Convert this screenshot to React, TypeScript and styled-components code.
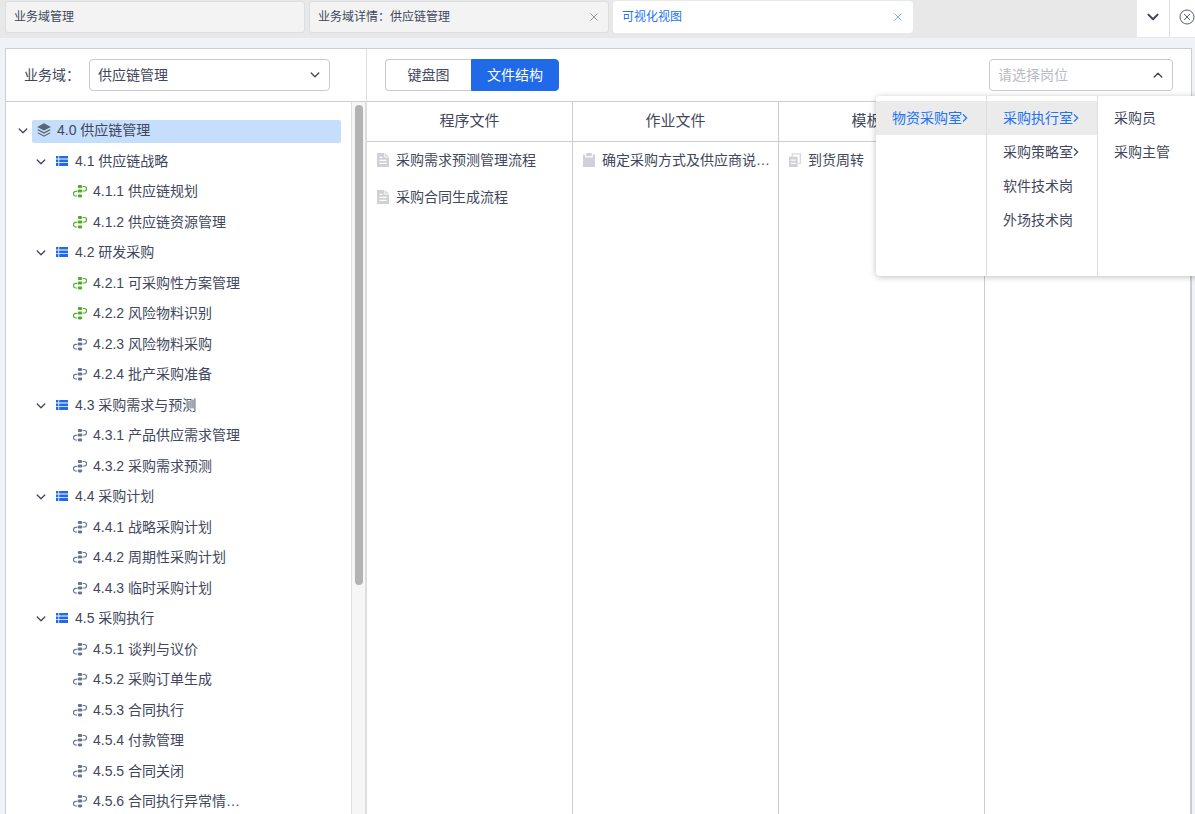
import React from "react";
import styled, { createGlobalStyle, css } from "styled-components";

const color = {
  text: "#41475c",
  blue: "#2069e9",
  link: "#2273ef",
  line: "#cccdd2",
  softLine: "#dcdee2",
  hover: "#ebebeb",
  green: "#4caf27",
  slate: "#66758f",
};

const GlobalStyle = createGlobalStyle`
  * { box-sizing: border-box; }
  body {
    margin: 0;
    overflow: hidden;
    background: #eff3f7;
    color: ${color.text};
    font: 14px/20px "Liberation Sans", "Noto Sans CJK SC", sans-serif;
  }
  button, input, select { font: inherit; color: inherit; }
  ul { margin: 0; padding: 0; list-style: none; }
`;

const plainButton = css`
  border: 0;
  padding: 0;
  background: none;
  cursor: pointer;
`;

const Page = styled.div`
  display: flex;
  flex-direction: column;
  height: 100vh;
`;

/* ---------- tab bar ---------- */

const TabBar = styled.nav`
  display: flex;
  flex: none;
  height: 38px;
  background: #e8e8e8;
  border-bottom: 1px solid #e8e8e8;
`;

const TabList = styled.div`
  display: flex;
  flex: 1;
  gap: 4px;
  padding: 1px 5px 4px;
  min-width: 0;
`;

const Tab = styled.div<{ $active?: boolean }>`
  display: flex;
  align-items: center;
  width: 300px;
  height: 32px;
  padding: 0 9px 0 8px;
  border: 1px solid ${(p) => (p.$active ? "#fff" : color.softLine)};
  border-radius: 3px;
  background: ${(p) => (p.$active ? "#fff" : "#f3f3f3")};
  color: ${(p) => (p.$active ? color.link : color.text)};
  font-size: 12px;
`;

const TabTitle = styled.button`
  ${plainButton}
  flex: 1;
  text-align: left;
`;

const TabClose = styled.button<{ $active?: boolean }>`
  ${plainButton}
  display: flex;
  color: ${(p) => (p.$active ? "#7fb0f5" : "#999")};
`;

const BarButton = styled.button<{ $last?: boolean }>`
  ${plainButton}
  display: flex;
  align-items: center;
  justify-content: ${(p) => (p.$last ? "flex-end" : "center")};
  width: ${(p) => (p.$last ? 26 : 32)}px;
  padding-bottom: 4px;
  border-left: ${(p) => (p.$last ? `1px solid ${color.softLine}` : "0")};
  background: #fff;
`;

/* ---------- panels ---------- */

const Main = styled.main`
  display: grid;
  grid-template-columns: 361px minmax(0, 1fr);
  flex: 1;
  min-height: 0;
  margin: 10px 3px 0 5px;
  border: 1px solid ${color.line};
  border-bottom: 0;
  background: #fff;
`;

const Side = styled.aside`
  display: flex;
  flex-direction: column;
  min-height: 0;
  border-right: 1px solid ${color.softLine};
`;

const Content = styled.section`
  display: flex;
  flex-direction: column;
  min-height: 0;
`;

const Toolbar = styled.header`
  display: flex;
  flex: none;
  align-items: center;
  height: 53px;
  padding: 0 18px;
  border-bottom: 1px solid ${color.line};
`;

const FieldLabel = styled.label`
  flex: none;
  width: 65px;
`;

const Field = styled.div<{ $width: number }>`
  position: relative;
  display: grid;
  width: ${(p) => p.$width}px;
`;

const control = css`
  grid-area: 1 / 1;
  width: 100%;
  height: 32px;
  padding: 0 32px 0 8px;
  border: 1px solid #c9cbd1;
  border-radius: 4px;
  outline: 0;
  background: #fff;
`;

const Select = styled.select`
  ${control}
  appearance: none;
`;

const TextInput = styled.input`
  ${control}
  &::placeholder { color: #b9bcc6; opacity: 1; }
`;

const FieldArrow = styled.span`
  display: flex;
  grid-area: 1 / 1;
  place-self: center end;
  margin-right: 10px;
  pointer-events: none;
`;

const Segment = styled.div`
  display: flex;
  margin-right: auto;
`;

const SegmentButton = styled.button<{ $active?: boolean }>`
  ${plainButton}
  width: ${(p) => (p.$active ? 88 : 86)}px;
  height: 32px;
  border: 1px solid ${(p) => (p.$active ? color.blue : "#c9cbd1")};
  border-right-width: ${(p) => (p.$active ? 1 : 0)}px;
  border-radius: ${(p) => (p.$active ? "0 4px 4px 0" : "4px 0 0 4px")};
  background: ${(p) => (p.$active ? color.blue : "#fff")};
  color: ${(p) => (p.$active ? "#fff" : color.text)};
`;

/* ---------- tree ---------- */

const TreeArea = styled.div`
  display: flex;
  flex: 1;
  min-height: 0;
`;

const TreeList = styled.ul`
  display: grid;
  grid-auto-rows: 30px 31px;
  align-content: start;
  flex: 1;
  min-width: 0;
  padding: 14px 10px 0 12px;
  overflow: hidden;
`;

const TreeRow = styled.li<{ $level: number }>`
  display: flex;
  align-items: center;
  gap: 4px;
  padding-left: ${(p) => p.$level * 18}px;
`;

const Toggle = styled.button`
  ${plainButton}
  display: flex;
  flex: none;
  width: 10px;
`;

const ToggleSpace = styled.span`
  flex: none;
  width: 10px;
`;

const TreeLabel = styled.button<{ $selected?: boolean }>`
  ${plainButton}
  display: flex;
  flex: 1;
  align-items: center;
  gap: 6px;
  height: 23px;
  padding: 0 5px 2px;
  border-radius: 2px;
  background: ${(p) => (p.$selected ? "#c5defc" : "none")};
  white-space: nowrap;
`;

const Track = styled.div`
  flex: none;
  width: 15px;
  padding: 3px;
  border: solid #dedede;
  border-width: 0 1px;
  background: #f6f6f6;
`;

const Thumb = styled.div`
  width: 8px;
  height: 68%;
  border-radius: 4px;
  background: #b3b3b3;
`;

/* ---------- file columns ---------- */

const Columns = styled.div`
  display: grid;
  grid-template-columns: repeat(4, minmax(0, 1fr));
  flex: 1;
  min-height: 0;
`;

const Column = styled.section`
  border-right: 1px solid ${color.line};
`;

const ColumnTitle = styled.h2`
  height: 40px;
  margin: 0;
  border-bottom: 1px solid ${color.line};
  font-size: 15px;
  font-weight: 400;
  line-height: 38px;
  text-align: center;
`;

const FileRow = styled.li`
  display: flex;
  align-items: center;
  gap: 6px;
  height: 37px;
  padding: 0 0 2px 9px;
  white-space: nowrap;
`;

/* ---------- cascading menu ---------- */

const Menu = styled.div`
  position: absolute;
  top: 37px;
  left: -113px;
  z-index: 2;
  display: flex;
  height: 180px;
  border-radius: 4px;
  background: #fff;
  box-shadow: 0 1px 6px rgba(0, 0, 0, 0.25);
`;

const MenuList = styled.ul`
  width: 111px;
  padding: 5px 0;
  border-right: 1px solid ${color.softLine};
  &:last-child { border-right: 0; }
`;

const MenuItem = styled.button<{ $active?: boolean }>`
  ${plainButton}
  display: flex;
  align-items: center;
  width: 100%;
  height: 34px;
  padding-left: 16px;
  background: ${(p) => (p.$active ? color.hover : "none")};
  color: ${(p) => (p.$active ? color.link : color.text)};
`;

/* ---------- icons ---------- */

const Chevron = ({ up, bold, size = 10 }: { up?: boolean; bold?: boolean; size?: number }) => (
  <svg width={size} height={size} viewBox="0 0 10 10" fill="none" stroke="currentColor" strokeWidth={bold ? 1.7 : 1.3} strokeLinecap="round" strokeLinejoin="round">
    <path d={up ? "M1.2 7L5 3.2 8.8 7" : "M1.2 3L5 6.8 8.8 3"} />
  </svg>
);

const ChevronRight = () => (
  <svg width="6" height="10" viewBox="0 0 6 10" fill="none" stroke="currentColor" strokeWidth="1.3">
    <path d="M1 1.4L4.6 5 1 8.6" />
  </svg>
);

const Cross = () => (
  <svg width="10" height="10" viewBox="0 0 10 10" fill="none" stroke="currentColor" strokeWidth="1">
    <path d="M1.4 1.4l7.2 7.2M8.6 1.4L1.4 8.6" />
  </svg>
);

const CircleCross = () => (
  <svg width="16" height="16" viewBox="0 0 16 16" fill="none" stroke="#5b6175" strokeWidth="1">
    <circle cx="8" cy="8" r="7" />
    <path d="M5 5l6 6M11 5l-6 6" />
  </svg>
);

const LayersIcon = () => (
  <svg width="14" height="14" viewBox="0 0 14 14" fill="#596475">
    <path d="M7 .2l6.8 3.7L7 7.6.2 3.9z" />
    <path d="M1.5 6.3L7 9.3l5.5-3 1.3.7L7 10.7.2 7z" />
    <path d="M1.5 9.4L7 12.4l5.5-3 1.3.7L7 13.8.2 10.1z" />
  </svg>
);

const ListIcon = () => (
  <svg width="14" height="14" viewBox="0 0 14 14" fill={color.blue}>
    <path d="M1 2h2.4v2.6H1zM4.2 2H13v2.6H4.2zM1 5.4h2.4V8H1zM4.2 5.4H13V8H4.2zM1 8.8h2.4V12H1zM4.2 8.8H13V12H4.2z" />
  </svg>
);

const FlowIcon = ({ tint }: { tint: string }) => (
  <svg width="14" height="14" viewBox="0 0 14 14" fill={tint}>
    <rect x="4.8" y="1" width="4.4" height="3" rx="1.3" />
    <rect x="4.6" y="5.6" width="4.8" height="3" rx="1.3" />
    <rect x="4.8" y="10.4" width="4.4" height="3" rx="1.3" />
    <g fill="none" stroke={tint} strokeWidth="1.2" strokeLinecap="round">
      <path d="M10.3 2.5h1.2a2 2.2 0 0 1 0 4.5h-.9" />
      <path d="M3.5 7.3h-.9a2.1 2.3 0 0 0 0 4.7h1" />
    </g>
  </svg>
);

const DocIcon = () => (
  <svg width="14" height="14" viewBox="0 0 14 14">
    <path fill="#cfd1d7" d="M1 0h7.4v4.6H13V14H1z" />
    <path fill="#d9dbe0" d="M9.2 0L13 3.8H9.2z" />
    <path stroke="#fff" strokeWidth="1.3" d="M3.4 4.4h3M3.4 7.4h7.2M3.4 10.4h7.2" />
  </svg>
);

const ClipboardIcon = () => (
  <svg width="14" height="14" viewBox="0 0 14 14" fill="#cfd1d7">
    <path d="M1 1.4h2.2v3h7.6v-3H13V14H1z" />
    <rect x="4.2" y="0" width="5.6" height="3.2" rx=".4" />
  </svg>
);

const CopyIcon = () => (
  <svg width="14" height="14" viewBox="0 0 14 14" fill="none">
    <path d="M4.3 3.4V.9h8.1v9.5h-2" stroke="#d7d9de" strokeWidth="1.4" />
    <path fill="#cfd1d7" d="M1 3.6h8.6V14H1z" />
    <path stroke="#fff" strokeWidth="1.2" d="M2.8 7.2h4.8M2.8 10.3h4.8" />
  </svg>
);

/* ---------- data ---------- */

type Node = { level: number; text: string; done?: boolean };

const nodes: Node[] = [
  { level: 0, text: "4.0 供应链管理" },
  { level: 1, text: "4.1 供应链战略" },
  { level: 2, text: "4.1.1 供应链规划", done: true },
  { level: 2, text: "4.1.2 供应链资源管理", done: true },
  { level: 1, text: "4.2 研发采购" },
  { level: 2, text: "4.2.1 可采购性方案管理", done: true },
  { level: 2, text: "4.2.2 风险物料识别", done: true },
  { level: 2, text: "4.2.3 风险物料采购" },
  { level: 2, text: "4.2.4 批产采购准备" },
  { level: 1, text: "4.3 采购需求与预测" },
  { level: 2, text: "4.3.1 产品供应需求管理" },
  { level: 2, text: "4.3.2 采购需求预测" },
  { level: 1, text: "4.4 采购计划" },
  { level: 2, text: "4.4.1 战略采购计划" },
  { level: 2, text: "4.4.2 周期性采购计划" },
  { level: 2, text: "4.4.3 临时采购计划" },
  { level: 1, text: "4.5 采购执行" },
  { level: 2, text: "4.5.1 谈判与议价" },
  { level: 2, text: "4.5.2 采购订单生成" },
  { level: 2, text: "4.5.3 合同执行" },
  { level: 2, text: "4.5.4 付款管理" },
  { level: 2, text: "4.5.5 合同关闭" },
  { level: 2, text: "4.5.6 合同执行异常情…" },
];

const columns = [
  { title: "程序文件", icon: <DocIcon />, files: ["采购需求预测管理流程", "采购合同生成流程"] },
  { title: "作业文件", icon: <ClipboardIcon />, files: ["确定采购方式及供应商说…"] },
  { title: "模板文件", icon: <CopyIcon />, files: ["到货周转"] },
  { title: "", icon: null, files: [] },
];

const menu = [
  [{ text: "物资采购室", more: true, active: true }],
  [
    { text: "采购执行室", more: true, active: true },
    { text: "采购策略室", more: true },
    { text: "软件技术岗" },
    { text: "外场技术岗" },
  ],
  [{ text: "采购员" }, { text: "采购主管" }],
] as { text: string; more?: boolean; active?: boolean }[][];

const tabs = [
  { title: "业务域管理" },
  { title: "业务域详情：供应链管理", closable: true },
  { title: "可视化视图", closable: true, active: true },
];

const NodeIcon = ({ node }: { node: Node }) => {
  if (node.level === 0) return <LayersIcon />;
  if (node.level === 1) return <ListIcon />;
  return <FlowIcon tint={node.done ? color.green : color.slate} />;
};

export default function App() {
  return (
    <Page>
      <GlobalStyle />
      <TabBar>
        <TabList>
          {tabs.map((t) => (
            <Tab key={t.title} $active={t.active}>
              <TabTitle>{t.title}</TabTitle>
              {t.closable && (
                <TabClose $active={t.active} aria-label="关闭">
                  <Cross />
                </TabClose>
              )}
            </Tab>
          ))}
        </TabList>
        <BarButton aria-label="更多">
          <Chevron bold size={12} />
        </BarButton>
        <BarButton $last aria-label="全部关闭">
          <CircleCross />
        </BarButton>
      </TabBar>

      <Main>
        <Side>
          <Toolbar>
            <FieldLabel htmlFor="domain">业务域：</FieldLabel>
            <Field $width={241}>
              <Select id="domain">
                <option>供应链管理</option>
              </Select>
              <FieldArrow>
                <Chevron />
              </FieldArrow>
            </Field>
          </Toolbar>
          <TreeArea>
            <TreeList>
              {nodes.map((n) => (
                <TreeRow key={n.text} $level={n.level}>
                  {n.level < 2 ? (
                    <Toggle aria-label="折叠">
                      <Chevron />
                    </Toggle>
                  ) : (
                    <ToggleSpace />
                  )}
                  <TreeLabel $selected={n.level === 0}>
                    <NodeIcon node={n} />
                    {n.text}
                  </TreeLabel>
                </TreeRow>
              ))}
            </TreeList>
            <Track>
              <Thumb />
            </Track>
          </TreeArea>
        </Side>

        <Content>
          <Toolbar>
            <Segment>
              <SegmentButton>键盘图</SegmentButton>
              <SegmentButton $active>文件结构</SegmentButton>
            </Segment>
            <Field $width={184}>
              <TextInput readOnly placeholder="请选择岗位" aria-label="请选择岗位" />
              <FieldArrow>
                <Chevron up />
              </FieldArrow>
              <Menu>
                {menu.map((list) => (
                  <MenuList key={list[0].text}>
                    {list.map((item) => (
                      <li key={item.text}>
                        <MenuItem $active={item.active}>
                          {item.text}
                          {item.more && <ChevronRight />}
                        </MenuItem>
                      </li>
                    ))}
                  </MenuList>
                ))}
              </Menu>
            </Field>
          </Toolbar>
          <Columns>
            {columns.map((c, i) => (
              <Column key={i}>
                <ColumnTitle>{c.title}</ColumnTitle>
                <ul>
                  {c.files.map((f) => (
                    <FileRow key={f}>
                      {c.icon}
                      {f}
                    </FileRow>
                  ))}
                </ul>
              </Column>
            ))}
          </Columns>
        </Content>
      </Main>
    </Page>
  );
}
